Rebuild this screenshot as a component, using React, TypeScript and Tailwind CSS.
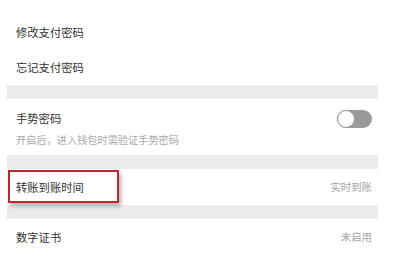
export default function App() {
  const font = { fontFamily: '"Noto Sans CJK SC", "Noto Sans", sans-serif' };
  return (
    <div className="w-[396px] h-[273px] bg-white overflow-hidden" style={font}>
      <div className="ml-[7px] w-[371px] pt-[14px]">
        <div className="h-[36px] flex items-center pl-[9px] text-[11.3px] text-[#333]">修改支付密码</div>
        <div className="h-[35px] flex items-center pl-[9px] text-[11.3px] text-[#333]">忘记支付密码</div>
        <div className="h-[14px] bg-[#ebebeb]" />
        <div className="h-[56px] flex items-center justify-between pl-[9px] pr-[6px]">
          <div className="flex flex-col">
            <span className="text-[11.3px] leading-[14px] text-[#333] mt-[3px]">手势密码</span>
            <span className="text-[10.2px] leading-[12px] text-[#aaa] mt-[9px]">开启后，进入钱包时需验证手势密码</span>
          </div>
          <div className="w-[35px] h-[18px] rounded-full bg-[#9a9a9a] relative -mt-[17px]">
            <div className="absolute left-0 top-0 w-[18px] h-[18px] rounded-full bg-white border-[1.5px] border-[#9a9a9a]" />
          </div>
        </div>
        <div className="h-[14px] bg-[#ebebeb]" />
        <div className="h-[36px] flex items-center justify-between pl-[9px] pr-[6px] relative">
          <span className="text-[11.3px] text-[#333]">转账到账时间</span>
          <span className="text-[10.4px] text-[#a6a6a6]">实时到账</span>
          <div className="absolute left-[1px] top-[1px] w-[111px] h-[33px] border-2 border-[#c0272d] shadow-[2px_3px_4px_rgba(0,0,0,0.3)]" />
        </div>
        <div className="h-[14px] bg-[#ebebeb]" />
        <div className="h-[36px] flex items-center justify-between pl-[9px] pr-[6px]">
          <span className="text-[11.3px] text-[#333]">数字证书</span>
          <span className="text-[10.4px] text-[#a6a6a6]">未启用</span>
        </div>
      </div>
    </div>
  );
}
